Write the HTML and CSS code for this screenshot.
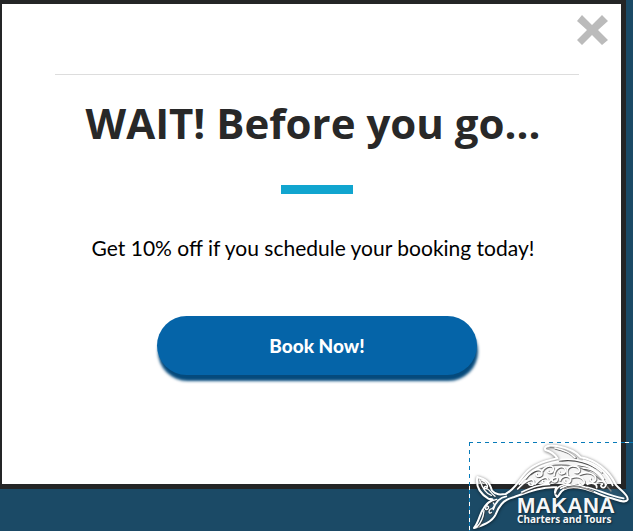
FILE: index.html
```html
<!DOCTYPE html>
<html lang="en">
<head>
<meta charset="utf-8">
<meta name="viewport" content="width=device-width, initial-scale=1">
<title>Makana Charters and Tours</title>
<link rel="stylesheet" href="styles.css">
</head>
<body>
<main class="dialog" role="dialog" aria-labelledby="offer-title">
  <header class="dialog-header">
    <button class="close" type="button" aria-label="Close">
      <svg viewBox="0 0 32 32" aria-hidden="true"><path d="M6 1 16 11 26 1 32 7 22 16 32 26 26 31 16 21 6 31 1 26 11 16 1 7Z"/></svg>
    </button>
  </header>
  <section class="offer">
    <div class="copy"><h1 id="offer-title">WAIT! Before you go...</h1></div>
    <div class="accent"></div>
    <div class="copy"><p>Get 10% off if you schedule your booking today!</p></div>
    <button class="book" type="button">Book Now!</button>
  </section>
</main>
<aside class="brand">
  <svg class="dolphin" viewBox="18 18 492 267" aria-hidden="true">
    <g class="lines">
      <path class="body" d="M128 174C155 160 166 135 187 112C207 88 238 77 283 67C274 53 266 47 247 42C241 30 260 25 286 31C316 37 340 49 353 64C397 72 438 103 458 146C472 163 497 177 494 191C489 203 467 193 446 187C414 179 391 164 358 157C335 152 316 153 303 160C289 168 290 179 282 183C273 172 275 162 281 154C235 151 188 171 151 184C119 192 107 212 98 235C88 258 58 268 33 276C52 255 50 217 78 198C94 188 91 191 76 188C49 171 38 148 43 123C68 129 80 139 87 164C99 178 113 176 128 174Z"/>
      <path class="shade" d="M261 34C290 35 318 45 340 66M290 76C324 70 365 78 398 97M204 116C236 90 283 82 325 90C371 97 405 117 444 165M305 158C329 146 360 153 391 167"/>
      <path class="swirl" d="M276 36C304 42 326 54 336 65M294 71C336 66 384 78 416 108M164 159C191 130 211 122 213 139C212 152 193 149 198 140M188 126C206 99 237 93 237 111C236 125 215 123 220 113M238 105C247 87 274 84 271 101C268 115 250 111 255 103M216 145C238 119 257 120 255 134C252 147 234 142 239 134M254 144C265 123 285 119 283 130C279 144 263 135 268 131M273 119C275 91 303 84 307 101C308 116 287 117 288 106M291 133C297 116 321 118 323 131C320 146 301 142 305 132M314 117C307 99 319 85 338 91C358 99 347 115 336 109M323 126C341 118 357 123 363 134C367 150 348 150 347 140M345 85C381 89 404 101 422 128M351 115C378 103 399 116 398 129C395 143 377 136 382 127M361 96C391 98 410 113 430 146M373 145C388 137 403 144 401 155M405 137C422 131 435 145 424 154C414 157 410 147 418 145M277 170C281 148 304 144 321 146M176 168C208 154 230 144 260 145"/>
      <path class="swirl tail" d="M50 132C58 155 68 174 85 178M56 132C72 137 79 156 68 158C61 156 66 148 70 152M62 159C78 154 81 169 96 181M101 190C79 194 66 207 68 220C76 223 80 211 73 210M91 201C98 207 91 219 81 220C75 228 80 235 85 229M63 224C61 245 51 263 43 271"/>
      <path class="highlight" d="M130 181C110 184 98 197 91 220M169 145C205 96 244 84 285 76M361 73C403 83 433 112 449 148M293 157C323 140 348 147 367 153C400 157 430 178 482 187"/>
    </g>
  </svg>
  <div class="brand-text"><strong>MAKANA</strong><span>Charters and Tours</span></div>
</aside>
</body>
</html>
```
FILE: styles.css
```css
* { box-sizing: border-box; }

body {
  position: relative;
  display: flex;
  min-height: 100vh;
  margin: 0;
  padding: 0 7px 42px 0;
  overflow: hidden;
  background: #1b4a66;
  font-family: Lato, sans-serif;
}

.dialog {
  flex: 1;
  padding: 10px 42px 0 53px;
  border: solid #242526;
  border-width: 4px 5px 5px 2px;
  background: #fff;
}

.dialog-header {
  display: flex;
  justify-content: flex-end;
  height: 61px;
  border-bottom: 1px solid #ddd;
}

.close {
  width: 32px;
  height: 32px;
  margin-right: -29px;
  padding: 0;
  border: 0;
  background: none;
  cursor: pointer;
}

.close svg {
  display: block;
  fill: #bbb;
}

.offer {
  display: flex;
  flex-direction: column;
  align-items: center;
  text-align: center;
}

.copy {
  padding-right: 8px;
}

h1 {
  margin: 18px 0 0;
  color: #282828;
  font: bold 42px/60px "Open Sans", sans-serif;
  white-space: nowrap;
}

.accent {
  width: 72px;
  height: 9px;
  margin-top: 32px;
  background: #11a5cf;
}

p {
  margin: 39px 0 0;
  color: #000;
  font-size: 21px;
  line-height: 30px;
  white-space: nowrap;
}

.book {
  width: 320px;
  height: 59px;
  margin-top: 53px;
  padding: 0;
  border: 0;
  border-radius: 30px;
  background: #0564a8;
  box-shadow: 1px 6px 3px #054a7c;
  color: #fff;
  font: 900 19px Lato, sans-serif;
  cursor: pointer;
}

.brand {
  position: absolute;
  right: 0;
  bottom: 0;
  width: 164px;
  height: 89px;
  background:
    repeating-linear-gradient(90deg, #087bb9 0 4px, #fff 4px 8px) top / 100% 1px no-repeat,
    repeating-linear-gradient(#087bb9 0 4px, #fff 4px 8px) left / 1px 100% no-repeat;
}

.dolphin {
  display: block;
  width: 100%;
  height: 100%;
}

.lines {
  fill: none;
  stroke-linecap: round;
  stroke-linejoin: round;
}

.body {
  fill: #fff1;
  stroke: #fff;
  stroke-width: 6px;
  filter: drop-shadow(1px 2px 4px #000a);
}

.shade {
  stroke: #888;
  stroke-width: 4px;
}

.swirl {
  stroke: #fff;
  stroke-width: 5px;
  filter: drop-shadow(2px 3px 1px #333c);
}

.tail {
  stroke-width: 4px;
}

.highlight {
  stroke: #fff;
  stroke-width: 5px;
}

.brand-text {
  position: absolute;
  left: 48px;
  bottom: 7px;
  display: flex;
  flex-direction: column;
  color: #f5f7f8;
  text-shadow: 1px 1px 2px #0008;
  white-space: nowrap;
}

.brand-text strong {
  font: bold 22px/16px "Liberation Sans", sans-serif;
}

.brand-text span {
  font: bold 10px/10px "Noto Sans", sans-serif;
}
```
